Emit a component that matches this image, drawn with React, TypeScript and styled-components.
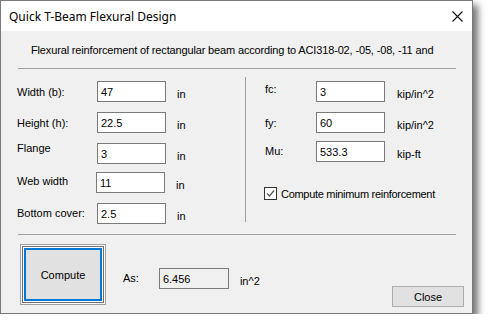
import React from "react";
import styled, { createGlobalStyle } from "styled-components";

const GlobalStyle = createGlobalStyle`
  html, body {
    margin: 0;
    padding: 0;
    background: #ffffff;
  }
  body {
    font-family: "Liberation Sans", Arial, sans-serif;
    font-size: 11px;
    color: #000;
  }
`;

const Window = styled.div`
  width: 471px;
  height: 312px;
  border: 1px solid #7a7a7a;
  background: #f0f0f0;
  box-shadow: 5px 5px 7px rgba(0, 0, 0, 0.55);
  display: flex;
  flex-direction: column;
`;

const TitleBar = styled.div`
  height: 30px;
  background: #ffffff;
  display: flex;
  align-items: center;
  padding: 0 8px 0 8px;
  font-family: "Noto Sans", "Open Sans", sans-serif;
  font-size: 12px;
`;

const TitleText = styled.span`
  flex: 1;
  margin-top: 1px;
`;

const CloseX = styled.svg`
  width: 11px;
  height: 11px;
  margin-right: 1px;
`;

const Body = styled.div`
  flex: 1;
  display: flex;
  flex-direction: column;
`;

const Description = styled.div`
  padding: 13px 0 0 30px;
  line-height: 13px;
  height: 13px;
  letter-spacing: -0.15px;
`;

const Separator = styled.div<{ $top: number }>`
  margin: ${({ $top }) => $top}px 16px 0 17px;
  border-top: 1px solid #a0a0a0;
`;

const FieldsArea = styled.div`
  display: grid;
  grid-template-columns: 244px 1px 1fr;
`;

const Column = styled.div<{ $left: number }>`
  padding: 12px 0 11px ${({ $left }) => $left}px;
  display: flex;
  flex-direction: column;
`;

const Divider = styled.div`
  margin-top: 8px;
  height: 145px;
  background: #a0a0a0;
`;

const Row = styled.div<{ $gap: number }>`
  display: flex;
  align-items: flex-start;
  height: 20px;
  margin-top: ${({ $gap }) => $gap}px;
`;

const Label = styled.span<{ $dy: number; $w?: number }>`
  width: ${({ $w }) => ($w ? `${$w}px` : "auto")};
  flex: none;
  margin-top: ${({ $dy }) => $dy}px;
  line-height: 13px;
  white-space: nowrap;
`;

const TextBox = styled.div<{ $w: number; $dx?: number; $readOnly?: boolean }>`
  box-sizing: border-box;
  width: ${({ $w }) => $w}px;
  height: 21px;
  flex: none;
  margin-left: ${({ $dx }) => $dx ?? 0}px;
  border: 1px solid #7a7a7a;
  background: ${({ $readOnly }) => ($readOnly ? "#f0f0f0" : "#ffffff")};
  padding: 3px 0 0 3px;
  line-height: 14px;
`;

const Unit = styled.span<{ $gap: number }>`
  margin: 7px 0 0 ${({ $gap }) => $gap}px;
  line-height: 13px;
  white-space: nowrap;
`;

const CheckRow = styled.div`
  display: flex;
  align-items: center;
  margin-top: 26px;
  margin-left: -1px;
`;

const CheckText = styled.span`
  letter-spacing: -0.3px;
`;

const Box = styled.div`
  box-sizing: border-box;
  width: 13px;
  height: 13px;
  border: 1px solid #333333;
  background: #ffffff;
  display: flex;
  align-items: center;
  justify-content: center;
  margin-right: 4px;
`;

const Footer = styled.div`
  display: flex;
  align-items: flex-start;
  padding: 9px 8px 0 19px;
`;

const ComputeButton = styled.div`
  box-sizing: border-box;
  width: 86px;
  height: 61px;
  border: 1px solid #a0a0a0;
  background: #e1e1e1;
  box-shadow: inset 0 0 0 1px #ffffff, inset 0 0 0 2px #6e6e6e,
    inset 0 0 0 3px #ffffff, inset 0 0 0 5px #0078d7;
  display: flex;
  align-items: center;
  justify-content: center;
  padding-top: 1px;
`;

const ResultGroup = styled.div`
  display: flex;
  align-items: flex-start;
  margin: 24px 0 0 17px;
`;

const CloseButton = styled.div`
  box-sizing: border-box;
  width: 72px;
  height: 21px;
  margin: 42px 0 0 auto;
  border: 1px solid #adadad;
  background: #e1e1e1;
  display: flex;
  align-items: center;
  justify-content: center;
`;

type Field = {
  label: string;
  value: string;
  unit: string;
  gap: number;
  dy: number;
  dx?: number;
};

const leftFields: Field[] = [
  { label: "Width (b):", value: "47", unit: "in", gap: 0, dy: 5 },
  { label: "Height (h):", value: "22.5", unit: "in", gap: 11, dy: 5 },
  { label: "Flange", value: "3", unit: "in", gap: 11, dy: -1 },
  { label: "Web width", value: "11", unit: "in", gap: 9, dy: 3, dx: -1 },
  { label: "Bottom cover:", value: "2.5", unit: "in", gap: 11, dy: 4 },
];

const rightFields: Field[] = [
  { label: "fc:", value: "3", unit: "kip/in^2", gap: 0, dy: 2 },
  { label: "fy:", value: "60", unit: "kip/in^2", gap: 11, dy: 5 },
  { label: "Mu:", value: "533.3", unit: "kip-ft", gap: 9, dy: 4 },
];

export default function App() {
  return (
    <>
      <GlobalStyle />
      <Window>
        <TitleBar>
          <TitleText>Quick T-Beam Flexural Design</TitleText>
          <CloseX viewBox="0 0 11 11">
            <path d="M0.5 0.5 L10.5 10.5 M10.5 0.5 L0.5 10.5" stroke="#111" strokeWidth="1.1" fill="none" />
          </CloseX>
        </TitleBar>
        <Body>
          <Description>
            Flexural reinforcement of rectangular beam according to ACI318-02, -05, -08, -11 and
          </Description>
          <Separator $top={11} />
          <FieldsArea>
            <Column $left={16}>
              {leftFields.map((f) => (
                <Row key={f.label} $gap={f.gap}>
                  <Label $dy={f.dy} $w={80}>{f.label}</Label>
                  <TextBox $w={69} $dx={f.dx}>{f.value}</TextBox>
                  <Unit $gap={11}>{f.unit}</Unit>
                </Row>
              ))}
            </Column>
            <Divider />
            <Column $left={19}>
              {rightFields.map((f) => (
                <Row key={f.label} $gap={f.gap}>
                  <Label $dy={f.dy} $w={51}>{f.label}</Label>
                  <TextBox $w={69}>{f.value}</TextBox>
                  <Unit $gap={12}>{f.unit}</Unit>
                </Row>
              ))}
              <CheckRow>
                <Box>
                  <svg width="9" height="9" viewBox="0 0 9 9">
                    <path d="M1 4.5 L3.5 7 L8 1.5" stroke="#555" strokeWidth="1.2" fill="none" />
                  </svg>
                </Box>
                <CheckText>Compute minimum reinforcement</CheckText>
              </CheckRow>
            </Column>
          </FieldsArea>
          <Separator $top={0} />
          <Footer>
            <ComputeButton>Compute</ComputeButton>
            <ResultGroup>
              <Label $dy={4}>As:</Label>
              <TextBox $w={70} $dx={20} $readOnly>6.456</TextBox>
              <Unit $gap={11}>in^2</Unit>
            </ResultGroup>
            <CloseButton>Close</CloseButton>
          </Footer>
        </Body>
      </Window>
    </>
  );
}
